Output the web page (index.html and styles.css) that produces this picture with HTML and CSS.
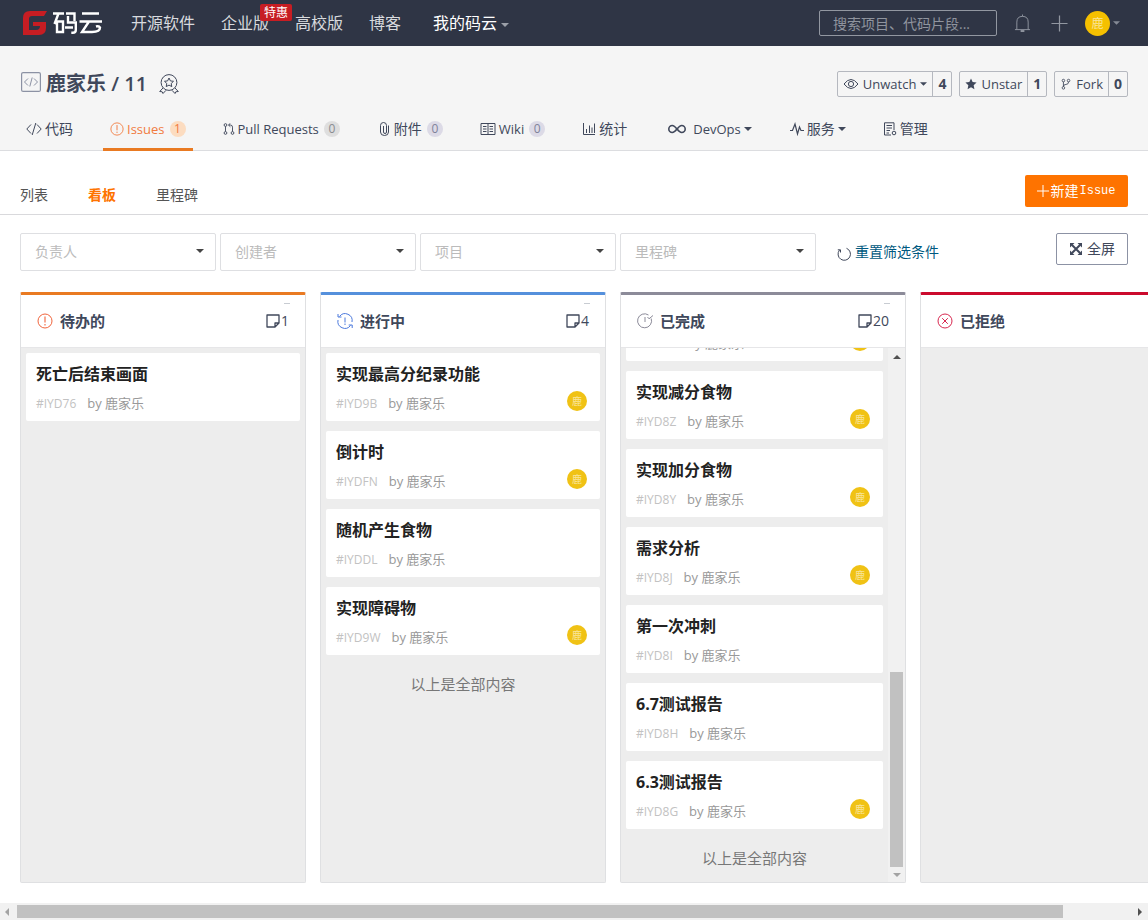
FILE: index.html
```html
<!DOCTYPE html>
<html lang="zh-CN">
<head>
<meta charset="utf-8">
<title>鹿家乐 / 11 - 码云</title>
<link rel="stylesheet" href="styles.css">
</head>
<body>
<svg class="sprite" aria-hidden="true">
  <symbol id="caret" viewBox="0 0 8 4"><path d="M0 0h8L4 4z" fill="currentColor"/></symbol>
  <symbol id="note" viewBox="0 0 14 14"><path d="M1 1h12v8l-4 4H1zM13 9H9v4" fill="none" stroke="currentColor" stroke-width="1.3" stroke-linejoin="round"/></symbol>
  <symbol id="alert" viewBox="0 0 16 16"><circle cx="8" cy="8" r="7" fill="none" stroke="currentColor"/><path d="M8 3.500v6M8 11v1.500" stroke="currentColor" stroke-width="1.100"/></symbol>
</svg>

<header class="topbar">
  <a class="logo" href="#" aria-label="码云">
    <svg class="logo-mark" viewBox="0 0 26 26"><path d="M25 1H8Q1 1 1 8v17h16q7 0 7-7v-6H11v4h7q0 4-4 4H7V9q0-3 3-3h12z" fill="#c71d23"/></svg>
    <svg class="logo-word" viewBox="0 0 50 26" fill="none" stroke="#fff" stroke-width="2.4"><path d="M0 3.500h11M5.500 3.500L1.500 14M4 11.500h6v10.500H4zM13 3.500h8.500v7.500M15 6v6.500h7.800v7.500q0 2.800-3 2.800h-1.500M12 17.500h8M29 3.500h17M26.500 11.500h22.500M36 11.500L29 22h10q8 0 8-4.500-1-2-4-1"/></svg>
  </a>
  <nav class="mainnav">
    <a href="#">开源软件</a>
    <a href="#" class="has-tag">企业版<span class="tag">特惠</span></a>
    <a href="#">高校版</a>
    <a href="#">博客</a>
    <a href="#" class="mine">我的码云<svg class="caret"><use href="#caret"/></svg></a>
  </nav>
  <input class="search" type="text" aria-label="搜索" placeholder="搜索项目、代码片段...">
  <button class="iconbtn bell" aria-label="通知"><svg viewBox="0 0 18 20" fill="none" stroke="currentColor"><path d="M1 17h16M3 17V9q0-6 6-6t6 6v8M9 1v2"/><path d="M7 18.500h4" stroke-width="2"/></svg></button>
  <button class="iconbtn plus" aria-label="新建"><svg viewBox="0 0 18 18" fill="none" stroke="currentColor"><path d="M9 0.500v17M0.500 9h17" stroke-width="1.300"/></svg></button>
  <button class="account" aria-label="账户"><span class="avatar big">鹿</span><svg class="caret"><use href="#caret"/></svg></button>
</header>

<section class="repo">
  <div class="repo-head">
    <svg class="repo-icon" viewBox="0 0 20 20" fill="none" stroke="currentColor"><rect x="0.6" y="0.6" width="18.8" height="18.8" rx="1.5" stroke-width="1.2"/><path d="M7 6.500L3.500 10 7 13.500M13 6.500l3.500 3.500-3.500 3.500M11.200 5.500l-2.400 9"/></svg>
    <h1>鹿家乐 / 11</h1>
    <svg class="medal" viewBox="0 0 20 20" fill="none" stroke="currentColor"><circle cx="10" cy="8.500" r="7.900"/><path d="M10 4l1.400 2.900 3.100.4-2.300 2.200.6 3.100L10 11.100l-2.800 1.500.6-3.100-2.300-2.200 3.100-.4zM4 14l-3.300 3.500 2.500.3.800 1.700 3-3.200M16 14l3.300 3.500-2.500.3-.8 1.700-3-3.200"/></svg>
    <div class="social">
      <div class="pair"><button><svg class="i16" viewBox="0 0 16 16" fill="none" stroke="currentColor"><path d="M1 8q7-9 14 0-7 9-14 0z"/><circle cx="8" cy="8" r="2.600"/></svg>Unwatch<svg class="caret small"><use href="#caret"/></svg></button><a href="#">4</a></div>
      <div class="pair"><button><svg class="i12" viewBox="0 0 14 14"><path d="M7 .5l1.900 4.300 4.600.5-3.400 3.100.9 4.600L7 10.700 3 13l.9-4.600L.5 5.300l4.600-.5z" fill="currentColor"/></svg>Unstar</button><a href="#">1</a></div>
      <div class="pair"><button><svg class="i12" viewBox="0 0 14 14" fill="none" stroke="currentColor"><circle cx="4" cy="3" r="1.500"/><circle cx="10" cy="3" r="1.500"/><circle cx="4" cy="11.500" r="1.500"/><path d="M4 4.500V10M10 4.500q0 3-3 3T4 10"/></svg>Fork</button><a href="#">0</a></div>
    </div>
  </div>
  <nav class="tabs">
    <a href="#"><svg class="i16" viewBox="0 0 16 16" fill="none" stroke="currentColor"><path d="M5 3.500L.8 8 5 12.500M11 3.500L15.200 8 11 12.500M9.800 2L6.200 14"/></svg>代码</a>
    <a href="#" class="latin active"><svg class="i14"><use href="#alert"/></svg>Issues<span class="count">1</span></a>
    <a href="#" class="latin"><svg class="i12" viewBox="0 0 12 13" fill="none" stroke="currentColor"><circle cx="2.200" cy="2.200" r="1.500"/><circle cx="2.200" cy="10.800" r="1.500"/><circle cx="9.800" cy="10.800" r="1.500"/><path d="M2.200 3.700v5.600M9.800 9.300V4.500q0-2.300-2.300-2.300H5.500M7.500.3l-2 1.900 2 1.900"/></svg>Pull Requests<span class="count">0</span></a>
    <a href="#"><svg class="i14" viewBox="0 0 14 14" fill="none" stroke="currentColor"><path d="M11.500 3.500v6.500q0 3.500-4 3.500t-4-3.500V3.500q0-3 3-3t3 3v6.500q0 1.500-1.500 1.500T6.500 10V4"/></svg>附件<span class="count violet">0</span></a>
    <a href="#" class="latin"><svg class="i16" viewBox="0 0 16 14" fill="none" stroke="currentColor"><path d="M1 1.500h14v11H1zM8 1.500v11M3 4.500h3.500M3 7h3.500M3 9.500h3.500M9.500 4.500H13M9.500 7H13M9.500 9.500H13"/></svg>Wiki<span class="count violet">0</span></a>
    <a href="#"><svg class="i14" viewBox="0 0 14 14" fill="none" stroke="currentColor"><path d="M1.500 1v11.500H13M4.500 11V7M7.500 11V3.500M10 11V5.500M12.500 11V1.500"/></svg>统计</a>
    <a href="#" class="latin devops"><svg class="infinity" viewBox="0 0 18 10" fill="none" stroke="currentColor" stroke-width="1.600"><path d="M9 5C7 2.500 6 1.500 4.300 1.500a3.500 3.500 0 000 7C6 8.500 7 7.500 9 5s3-3.500 4.700-3.500a3.500 3.500 0 010 7C12 8.500 11 7.500 9 5z"/></svg>DevOps<svg class="caret"><use href="#caret"/></svg></a>
    <a href="#"><svg class="i14" viewBox="0 0 14 14" fill="none" stroke="currentColor"><path d="M0 8.500h2.500L5 2l2.500 10L9.500 5l1.500 3.500h3" stroke-width="1.200"/></svg>服务<svg class="caret"><use href="#caret"/></svg></a>
    <a href="#"><svg class="i14" viewBox="0 0 14 14" fill="none" stroke="currentColor"><path d="M8 13H1.500V.8h9.500V8M3.500 3.500H9M3.500 6H9M3.500 8.500H7M3.500 11H6"/><circle cx="11" cy="11" r="1.800"/></svg>管理</a>
  </nav>
</section>

<main>
  <div class="subnav">
    <a href="#">列表</a><a href="#" class="active">看板</a><a href="#">里程碑</a>
    <button class="create"><svg class="i12" viewBox="0 0 12 12" stroke="currentColor"><path d="M6 0v12M0 6h12"/></svg>新建<span>Issue</span></button>
  </div>

  <div class="filters">
    <label class="picker"><select aria-label="负责人"><option>负责人</option></select><svg class="caret"><use href="#caret"/></svg></label>
    <label class="picker"><select aria-label="创建者"><option>创建者</option></select><svg class="caret"><use href="#caret"/></svg></label>
    <label class="picker"><select aria-label="项目"><option>项目</option></select><svg class="caret"><use href="#caret"/></svg></label>
    <label class="picker"><select aria-label="里程碑"><option>里程碑</option></select><svg class="caret"><use href="#caret"/></svg></label>
    <a class="reset" href="#"><svg class="i14" viewBox="0 0 14 14" fill="none" stroke="currentColor"><path d="M9.500 1.300a6.200 6.200 0 11-7 1.800M.8 2.800h2.700v2.700"/></svg>重置筛选条件</a>
    <button class="fullscreen"><svg class="i14" viewBox="0 0 14 14"><path d="M1 1h4.500L1 5.500zM13 1v4.500L8.500 1zM1 13V8.500L5.500 13zM13 13H8.500L13 8.500z" fill="currentColor"/><path d="M3 3l8 8M11 3l-8 8" stroke="currentColor" stroke-width="2"/></svg>全屏</button>
  </div>

  <div class="board">
    <section class="column todo">
      <header><svg class="i16 state"><use href="#alert"/></svg><h2>待办的</h2><span class="total"><svg class="i14"><use href="#note"/></svg>1</span><i class="fold"></i></header>
      <div class="list"><div class="cards">
        <article class="card"><h3>死亡后结束画面</h3><p><span>#IYD76</span>by 鹿家乐</p></article>
      </div></div>
    </section>

    <section class="column doing">
      <header><svg class="i16 state" viewBox="0 0 16 16" fill="none" stroke="currentColor"><path d="M2.500 3.500a7 7 0 0112.500 5.500M1 7a7 7 0 0012.500 5.500M8 4.500v5M8 10.500V12M1 1v3h3.500M15.200 15v-3h-3.500"/></svg><h2>进行中</h2><span class="total"><svg class="i14"><use href="#note"/></svg>4</span><i class="fold"></i></header>
      <div class="list"><div class="cards">
        <article class="card"><h3>实现最高分纪录功能</h3><p><span>#IYD9B</span>by 鹿家乐</p><b class="avatar">鹿</b></article>
        <article class="card"><h3>倒计时</h3><p><span>#IYDFN</span>by 鹿家乐</p><b class="avatar">鹿</b></article>
        <article class="card"><h3>随机产生食物</h3><p><span>#IYDDL</span>by 鹿家乐</p></article>
        <article class="card"><h3>实现障碍物</h3><p><span>#IYD9W</span>by 鹿家乐</p><b class="avatar">鹿</b></article>
        <p class="end">以上是全部内容</p>
      </div></div>
    </section>

    <section class="column done">
      <header><svg class="i16 state" viewBox="0 0 16 16" fill="none" stroke="currentColor"><path d="M11.500 2a7 7 0 102.700 3.500M8 4v5M10.500 4l1.500 1.800L16 2.500"/></svg><h2>已完成</h2><span class="total"><svg class="i14"><use href="#note"/></svg>20</span><i class="fold"></i></header>
      <div class="list scrolled">
        <div class="cards">
          <article class="card"><p><span>#IYD90</span>by 鹿家乐</p><b class="avatar"></b></article>
          <article class="card"><h3>实现减分食物</h3><p><span>#IYD8Z</span>by 鹿家乐</p><b class="avatar">鹿</b></article>
          <article class="card"><h3>实现加分食物</h3><p><span>#IYD8Y</span>by 鹿家乐</p><b class="avatar">鹿</b></article>
          <article class="card"><h3>需求分析</h3><p><span>#IYD8J</span>by 鹿家乐</p><b class="avatar">鹿</b></article>
          <article class="card"><h3>第一次冲刺</h3><p><span>#IYD8I</span>by 鹿家乐</p></article>
          <article class="card"><h3>6.7测试报告</h3><p><span>#IYD8H</span>by 鹿家乐</p></article>
          <article class="card"><h3>6.3测试报告</h3><p><span>#IYD8G</span>by 鹿家乐</p><b class="avatar">鹿</b></article>
          <p class="end">以上是全部内容</p>
        </div>
        <div class="vbar"><svg class="up"><use href="#caret"/></svg><i></i><svg class="down"><use href="#caret"/></svg></div>
      </div>
    </section>

    <section class="column rejected">
      <header><svg class="i16 state" viewBox="0 0 16 16" fill="none" stroke="currentColor"><circle cx="8" cy="8" r="7"/><path d="M5.200 5.200l5.600 5.600M10.800 5.200l-5.600 5.600"/></svg><h2>已拒绝</h2></header>
      <div class="list"></div>
    </section>
  </div>
</main>

<div class="hbar"><svg class="left"><use href="#caret"/></svg><div class="track"><i></i></div><svg class="right"><use href="#caret"/></svg></div>
</body>
</html>
```
FILE: styles.css
```css
* { box-sizing: border-box; }
body {
  margin: 0;
  height: 100vh;
  display: flex;
  flex-direction: column;
  overflow: hidden;
  background: #fff;
  color: #40485b;
  font: 14px/20px "Open Sans", "Noto Sans CJK SC", sans-serif;
}
a { color: inherit; text-decoration: none; }
button, input, select { font: inherit; color: inherit; margin: 0; }
button { background: none; border: 0; padding: 0; }
h1, h2, h3, p { margin: 0; }
svg { display: block; flex: none; }
.sprite { position: absolute; width: 0; height: 0; }
.i12 { width: 12px; height: 12px; }
.i14 { width: 14px; height: 14px; }
.i16 { width: 16px; height: 16px; }
.caret { width: 8px; height: 4px; }
.infinity { width: 18px; height: 10px; margin-right: 4px; }

.topbar {
  height: 46px;
  flex: none;
  display: flex;
  align-items: center;
  padding: 0 28px 0 22px;
  background: #2f3545;
  color: #d8dade;
}
.logo { display: flex; gap: 5px; }
.logo-mark { width: 26px; height: 26px; }
.logo-word { width: 50px; height: 26px; }
.mainnav { display: flex; gap: 26px; margin: 0 auto 0 28px; font-size: 16px; }
.mainnav a { display: flex; align-items: center; white-space: nowrap; }
.mainnav .mine { color: #fff; margin-left: 6px; }
.mainnav .caret { margin: 4px 0 0 4px; color: #9b9fa8; }
.has-tag { position: relative; }
.tag {
  position: absolute;
  top: -9px;
  left: 39px;
  padding: 0 4px;
  border-radius: 2px;
  background: #c71d23;
  color: #fff;
  font-size: 12px;
  line-height: 17px;
}
.search {
  width: 178px;
  height: 26px;
  padding: 0 13px;
  border: 1px solid #9297a1;
  border-radius: 2px;
  background: transparent;
}
.search::placeholder { color: #8f949e; opacity: 1; }
.iconbtn { color: #9297a1; }
.bell { margin-left: 17px; }
.bell svg { width: 17px; height: 20px; }
.plus { margin-left: 20px; }
.plus svg { width: 17px; height: 17px; }
.account { display: flex; align-items: center; gap: 3px; margin-left: 17px; color: #858a95; }
.account .caret { width: 7px; }
.avatar {
  width: 20px;
  height: 20px;
  border-radius: 50%;
  background: #f0c215;
  color: #f9e59a;
  font-size: 10px;
  line-height: 20px;
  font-weight: 400;
  text-align: center;
}
.avatar.big { width: 25px; height: 25px; line-height: 25px; font-size: 12px; background: #f5c000; }

.repo { flex: none; background: #f5f5f5; border-bottom: 1px solid #dcdde0; }
.repo-head { display: flex; align-items: center; height: 62px; padding: 14px 20px 0 21px; }
.repo-icon { width: 20px; height: 20px; color: #8c92a4; margin-bottom: 4px; }
.repo h1 { margin: 0 12px 0 5px; font-size: 20px; line-height: 28px; font-weight: 600; }
.medal { width: 20px; height: 20px; }
.social { display: flex; gap: 7px; margin-left: auto; }
.pair { display: flex; height: 26px; border: 1px solid #b5b8bf; border-radius: 2px; }
.pair button { display: flex; align-items: center; gap: 4px; padding: 0 5px; font-size: 13px; }
.pair a { padding: 0 5px; border-left: 1px solid #b5b8bf; line-height: 24px; font-weight: 700; font-size: 14px; }
.caret.small { width: 7px; }
.tabs { display: flex; gap: 23px; height: 42px; padding: 0 19px; }
.tabs a {
  display: flex;
  align-items: center;
  gap: 3px;
  height: 43px;
  padding: 2px 7px 0;
  border-bottom: 3px solid transparent;
  white-space: nowrap;
}
.tabs .latin { font-size: 13px; }
.tabs .devops { padding: 2px 8px 0 11px; }
.tabs .active { color: #f17a3e; border-color: #e97a22; }
.count {
  min-width: 16px;
  height: 16px;
  margin-left: 2px;
  border-radius: 8px;
  background: #dedede;
  color: #8a8c91;
  font-size: 12px;
  line-height: 16px;
  text-align: center;
}
.count.violet { background: #dcdae6; color: #80829a; }
.active .count { background: #fcdcc0; color: #f17a3e; }

main { flex: 1; min-height: 0; display: flex; flex-direction: column; }
.subnav {
  display: flex;
  gap: 40px;
  height: 64px;
  flex: none;
  padding: 24px 20px 7px;
  border-bottom: 1px solid #d9d9dc;
  line-height: 40px;
  color: #555;
}
.subnav .active { color: #fe7300; font-weight: 700; }
.create {
  display: flex;
  align-items: center;
  justify-content: center;
  gap: 1px;
  width: 103px;
  height: 32px;
  margin-left: auto;
  border-radius: 2px;
  background: #fe7300;
  color: #fff;
}
.create span { font: 12px/20px "Liberation Mono", monospace; }
.filters { display: flex; flex: none; gap: 4px; padding: 18px 20px 0; }
.picker { position: relative; width: 196px; }
.picker select {
  width: 100%;
  height: 38px;
  padding: 0 14px;
  appearance: none;
  border: 1px solid #dedfe2;
  border-radius: 2px;
  background: #fff;
  color: #bbb;
}
.picker .caret { position: absolute; right: 12px; top: 16px; color: #444; }
.reset { display: flex; align-items: center; gap: 4px; height: 38px; margin-left: 17px; color: #005980; }
.reset svg { color: #40485b; margin-top: 3px; }
.fullscreen {
  display: flex;
  align-items: center;
  justify-content: center;
  gap: 4px;
  width: 72px;
  height: 32px;
  margin-left: auto;
  border: 1px solid #8c92a4;
  border-radius: 2px;
}

.board { flex: 1; min-height: 0; display: flex; gap: 14px; margin: 21px 0 20px; padding-left: 20px; overflow: hidden; }
.column {
  flex: none;
  width: 286px;
  display: flex;
  flex-direction: column;
  border: 1px solid #dfe0e2;
  border-top: 3px solid;
  border-radius: 2px;
  background: #ededed;
}
.todo { border-top-color: #e97a22; }
.doing { border-top-color: #5590dc; }
.done { border-top-color: #8c8b99; }
.rejected { border-top-color: #cb0a2d; }
.column > header {
  position: relative;
  display: flex;
  align-items: center;
  flex: none;
  height: 53px;
  padding: 0 16px;
  background: #fff;
  border-bottom: 1px solid #e6e6e8;
}
.column h2 { margin-left: 7px; font-size: 15px; line-height: 20px; font-weight: 700; }
.todo .state { color: #f0643c; }
.doing .state { color: #4a78dc; }
.done .state { color: #8c8b99; }
.rejected .state { color: #d8274f; }
.total { display: flex; align-items: center; gap: 1px; margin-left: auto; font-size: 14px; }
.fold { position: absolute; top: 8px; right: 15px; width: 6px; height: 1px; background: #c8ccd2; }
.list { flex: 1; min-height: 0; display: flex; overflow: hidden; }
.cards { flex: 1; display: flex; flex-direction: column; gap: 10px; padding: 5px 5px 12px; }
.scrolled .cards { justify-content: flex-end; }
.card {
  position: relative;
  flex: none;
  display: flex;
  flex-direction: column;
  justify-content: flex-end;
  height: 68px;
  padding: 7px 10px;
  background: #fff;
  border-radius: 2px;
}
.card h3 { color: #222; font-size: 16px; line-height: 24px; font-weight: 700; }
.card p { margin-top: 7px; font-size: 13px; line-height: 20px; color: #999; }
.card p span { margin-right: 11px; font-size: 12px; color: #c2c2c2; }
.card .avatar { position: absolute; right: 13px; bottom: 10px; }
.end { margin-top: 7px; text-align: center; font-size: 15px; line-height: 24px; color: #777; }
.vbar { width: 17px; display: flex; flex-direction: column; align-items: center; padding: 7px 0 5px; background: #f1f1f1; }
.vbar i { width: 13px; height: 195px; margin: auto 0 6px; background: #c1c1c1; }
.vbar svg { width: 8px; height: 4px; }
.up { transform: rotate(180deg); color: #505050; }
.down { color: #a3a3a3; }

.hbar { flex: none; display: flex; align-items: center; height: 17px; padding: 0 4px 0 3px; background: #f1f1f1; }
.hbar svg { width: 8px; height: 4px; }
.track { flex: 1; margin: 0 6px; }
.track i { display: block; width: 94%; height: 13px; background: #c1c1c1; }
.left { transform: rotate(90deg); color: #a3a3a3; }
.right { transform: rotate(-90deg); color: #505050; }
```
